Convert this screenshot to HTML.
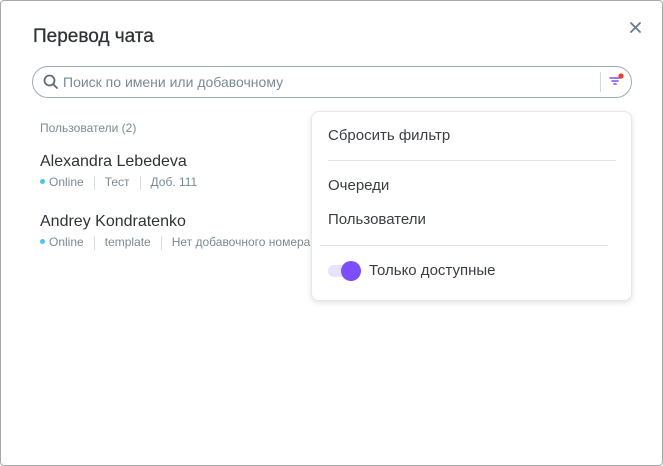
<!DOCTYPE html>
<html><head><meta charset="utf-8"><style>
*{box-sizing:border-box;margin:0;padding:0}
body{width:663px;height:466px;background:#fff;font-family:"Liberation Sans",sans-serif;overflow:hidden;position:relative}
.frame{position:absolute;left:0;top:0;width:663px;height:466px;border:1px solid #a9a9a9;border-radius:4px}
.t{position:absolute;white-space:nowrap}
.meta{font-size:12px;color:#7a8a94}
.sep{display:inline-block;width:1px;height:14px;background:#d6dde1;vertical-align:middle;margin:0 10px}
.dot{display:inline-block;width:5px;height:5px;border-radius:50%;background:#4fc3e8;vertical-align:middle;margin-right:4px;position:relative;top:-1px}
</style></head><body>
<div class="frame"></div>
<div class="t" style="left:33px;top:26px;font-size:19px;color:#2f3337;font-weight:500;-webkit-text-stroke:0.3px #2f3337">Перевод чата</div>
<svg style="position:absolute;left:630px;top:22px" width="11" height="11" viewBox="0 0 11 11"><path d="M1 1L10 10M10 1L1 10" stroke="#6b7b86" stroke-width="1.8" stroke-linecap="round"/></svg>
<div style="position:absolute;left:32px;top:66px;width:600px;height:32px;border:1px solid #9eadb5;border-radius:16px"></div>
<svg style="position:absolute;left:43px;top:74px" width="16" height="16" viewBox="0 0 16 16"><circle cx="6.5" cy="6.5" r="5" fill="none" stroke="#5d6d77" stroke-width="1.8"/><path d="M10.2 10.2L14 14" stroke="#5d6d77" stroke-width="1.8" stroke-linecap="round"/></svg>
<div class="t" style="left:63px;top:74px;font-size:14px;color:#7a8a94">Поиск по имени или добавочному</div>
<div style="position:absolute;left:600px;top:72px;width:1px;height:20px;background:#cfd8dc"></div>
<svg style="position:absolute;left:607px;top:72px" width="20" height="20" viewBox="0 0 20 20"><path d="M3 6h10M5 9h6M7 12h2" stroke="#7c4dff" stroke-width="1.6" stroke-linecap="round"/><circle cx="14" cy="4" r="2.6" fill="#ef3b2c"/></svg>
<div class="t" style="left:40px;top:121px;font-size:12px;color:#7a8a94">Пользователи (2)</div>
<div class="t" style="left:40px;top:153px;font-size:16px;color:#2f3337">Alexandra Lebedeva</div>
<div class="t meta" style="left:40px;top:175px"><span class="dot"></span>Online<span class="sep"></span>Тест<span class="sep"></span>Доб. 111</div>
<div class="t" style="left:40px;top:213px;font-size:16px;color:#2f3337">Andrey Kondratenko</div>
<div class="t meta" style="left:40px;top:235px"><span class="dot"></span>Online<span class="sep"></span>template<span class="sep"></span>Нет добавочного номера</div>
<div style="position:absolute;left:311px;top:111px;width:321px;height:190px;background:#fff;border:1px solid #e4e8ea;border-radius:8px;box-shadow:0 2px 6px rgba(0,0,0,.12)">
<div class="t" style="left:16px;top:15px;font-size:15px;color:#3a3e42">Сбросить фильтр</div>
<div style="position:absolute;left:16px;top:48px;width:288px;height:1px;background:#e0e4e6"></div>
<div class="t" style="left:16px;top:65px;font-size:15px;color:#3a3e42">Очереди</div>
<div class="t" style="left:16px;top:99px;font-size:15px;color:#3a3e42">Пользователи</div>
<div style="position:absolute;left:8px;top:133px;width:288px;height:1px;background:#e0e4e6"></div>
<div style="position:absolute;left:16px;top:153px;width:30px;height:12px;border-radius:6px;background:#e8e3fb"></div>
<div style="position:absolute;left:29px;top:149px;width:20px;height:20px;border-radius:50%;background:#7c4dff"></div>
<div class="t" style="left:57px;top:150px;font-size:15px;color:#3a3e42">Только доступные</div>
</div>
</body></html>
